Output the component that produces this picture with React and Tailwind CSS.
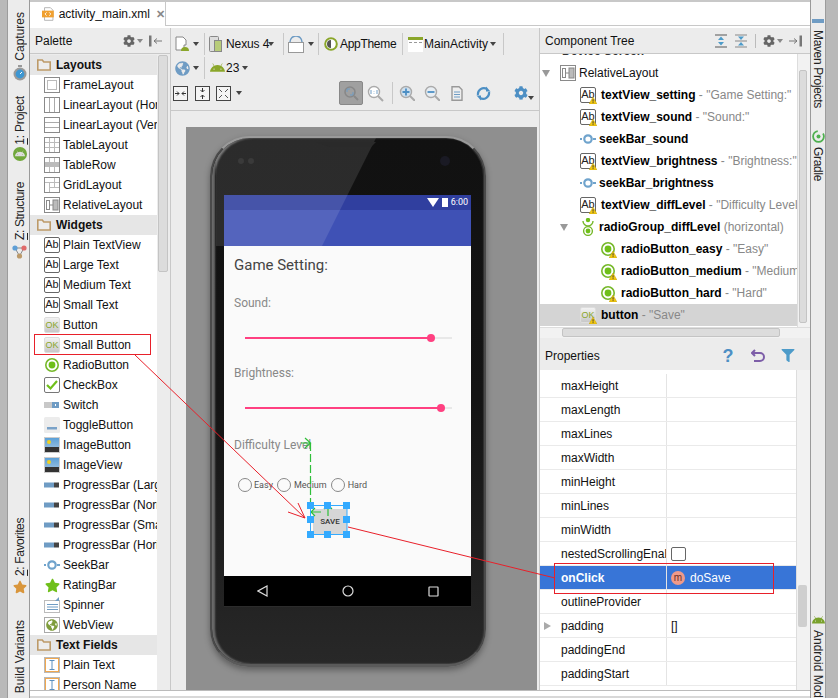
import React from "react";
import { FaAndroid, FaCog, FaGlobeAmericas, FaStar, FaFilter } from "react-icons/fa";

const UI = "font-['Liberation_Sans',sans-serif]";

const Caret = ({ className = "" }) => (
    <span className={`inline-block w-0 h-0 border-x-[3.5px] border-x-transparent border-t-[4px] border-t-[#444] ${className}`} />
);

const Sep = ({ className = "" }) => <span className={`w-px h-[22px] bg-[#c8c8c8] ${className}`} />;

const Box = ({ children }) => (
    <svg width="16" height="16" viewBox="0 0 16 16" fill="none" stroke="#8a8a8a">{children}</svg>
);

const AbIcon = () => (
    <span className="w-[16px] h-[16px] border border-[#666] rounded-[2px] bg-white text-[11px] leading-[13px] text-center text-[#222] shrink-0">Ab</span>
);

const OkIcon = () => (
    <span className="w-[16px] h-[16px] rounded-[2px] bg-gradient-to-b from-[#f2f2f2] to-[#c8c8c8] text-[9px] leading-[15px] text-center text-[#8aa62a] shrink-0 border border-[#ddd]">OK</span>
);

const Warn = () => (
    <svg className="absolute -right-[1px] -bottom-[1px]" width="8" height="7" viewBox="0 0 8 7"><path d="M4 0L8 7H0z" fill="#f2c811" stroke="#b89a10" strokeWidth="0.4" /><rect x="3.6" y="2.2" width="0.9" height="2.4" fill="#333" /><rect x="3.6" y="5.2" width="0.9" height="0.9" fill="#333" /></svg>
);

const RadioIcon = () => (
    <svg width="16" height="16" viewBox="0 0 16 16"><circle cx="8" cy="8" r="6.2" fill="#fff" stroke="#76b82a" strokeWidth="1.6" /><circle cx="8" cy="8" r="3.4" fill="#6fbf1a" /></svg>
);

const SeekIcon = () => (
    <svg width="16" height="10" viewBox="0 0 16 10"><rect x="0" y="4" width="2" height="2" fill="#6fa3cc" /><rect x="13" y="4" width="3" height="2" fill="#6fa3cc" /><circle cx="8" cy="5" r="3.7" fill="none" stroke="#6fa3cc" strokeWidth="2.2" /></svg>
);

const BarIcon = () => (
    <svg width="16" height="6" viewBox="0 0 16 6"><rect width="10" height="5" y="0.5" fill="#6f9cc4" /><rect x="10" width="5" height="5" y="0.5" fill="#444" /></svg>
);

const PicIcon = () => (
    <span className="w-[16px] h-[16px] border border-[#ccc] bg-gradient-to-b from-[#5aa0d8] to-[#a8c8e0] flex items-end relative shrink-0">
        <span className="absolute left-[2px] top-[2px] w-[4px] h-[4px] rounded-full bg-[#f0d020]" />
        <span className="w-full h-[5px] bg-[#333]" />
    </span>
);

const TextFieldIcon = () => (
    <svg width="16" height="16" viewBox="0 0 16 16"><rect x="0.5" y="0.5" width="15" height="15" fill="#fff" stroke="#b9b9b9" /><rect x="1.5" y="1.5" width="13" height="13" fill="#fff" stroke="#f0a850" /><path d="M5.5 3.5h5M5.5 12.5h5M8 3.5v9" stroke="#5a90c0" fill="none" /></svg>
);

const layoutIcons = {
    frame: <Box><rect x="0.5" y="0.5" width="15" height="15" /><rect x="3.5" y="3.5" width="9" height="9" stroke="#bbb" /></Box>,
    horiz: <Box><rect x="0.5" y="0.5" width="15" height="15" /><path d="M5.5 1v14M10.5 1v14" stroke="#aaa" /></Box>,
    vert: <Box><rect x="0.5" y="0.5" width="15" height="15" /><path d="M1 5.5h14M1 10.5h14" stroke="#aaa" /></Box>,
    table: <Box><rect x="0.5" y="0.5" width="15" height="15" /><path d="M1 5.5h14M1 10.5h14M5.5 1v14M10.5 1v14" stroke="#bbb" /></Box>,
    row: <Box><rect x="0.5" y="0.5" width="15" height="15" /><rect x="1" y="5" width="14" height="5" fill="#bbb" stroke="none" /><path d="M5.5 1v4M10.5 1v4M5.5 10v5M10.5 10v5" stroke="#bbb" /></Box>,
    grid: <Box><rect x="0.5" y="0.5" width="15" height="15" /><path d="M1 5.5h14M5.5 5v10M10.5 1v10M5 10.5h10" stroke="#bbb" /></Box>,
    relative: <Box><rect x="0.5" y="0.5" width="15" height="15" /><rect x="9" y="3" width="5" height="10" fill="#bbb" stroke="#888" /><rect x="2.5" y="3.5" width="3" height="9" /><path d="M5.5 8H9" /></Box>,
};

const spinnerIcon = (
    <svg width="16" height="16" viewBox="0 0 16 16"><rect x="0.5" y="3.5" width="15" height="12" fill="#fff" stroke="#bbb" /><path d="M3 7.5h11M3 10h11M3 12.5h11" stroke="#6f9cc4" /><path d="M15 0v4h-4z" fill="#6f9cc4" /></svg>
);

const palette = [
    { head: "Layouts" },
    { label: "FrameLayout", icon: layoutIcons.frame },
    { label: "LinearLayout (Horizontal)", icon: layoutIcons.horiz },
    { label: "LinearLayout (Vertical)", icon: layoutIcons.vert },
    { label: "TableLayout", icon: layoutIcons.table },
    { label: "TableRow", icon: layoutIcons.row },
    { label: "GridLayout", icon: layoutIcons.grid },
    { label: "RelativeLayout", icon: layoutIcons.relative },
    { head: "Widgets" },
    { label: "Plain TextView", icon: <AbIcon /> },
    { label: "Large Text", icon: <AbIcon /> },
    { label: "Medium Text", icon: <AbIcon /> },
    { label: "Small Text", icon: <AbIcon /> },
    { label: "Button", icon: <OkIcon /> },
    { label: "Small Button", icon: <OkIcon /> },
    { label: "RadioButton", icon: <RadioIcon /> },
    {
        label: "CheckBox",
        icon: <svg width="16" height="16" viewBox="0 0 16 16"><rect x="0.5" y="0.5" width="15" height="15" rx="1.5" fill="#fff" stroke="#777" /><path d="M3 8l3.5 3.5L13 4" fill="none" stroke="#6fbf1a" strokeWidth="2.2" /></svg>,
    },
    {
        label: "Switch",
        icon: <svg width="16" height="8" viewBox="0 0 16 8"><rect y="1" width="9" height="6" fill="#c8c8c8" /><rect x="8" y="1" width="7" height="6" fill="#6f9cc4" /><rect x="11" y="3" width="1" height="2" fill="#fff" /></svg>,
    },
    {
        label: "ToggleButton",
        icon: <svg width="16" height="16" viewBox="0 0 16 16"><rect width="16" height="16" rx="1.5" fill="#ececec" /><rect x="3" y="10" width="10" height="2.5" fill="#7aa2c8" /></svg>,
    },
    { label: "ImageButton", icon: <PicIcon /> },
    { label: "ImageView", icon: <PicIcon /> },
    { label: "ProgressBar (Large)", icon: <BarIcon /> },
    { label: "ProgressBar (Normal)", icon: <BarIcon /> },
    { label: "ProgressBar (Small)", icon: <BarIcon /> },
    { label: "ProgressBar (Horizontal)", icon: <BarIcon /> },
    { label: "SeekBar", icon: <SeekIcon /> },
    { label: "RatingBar", icon: <FaStar className="text-[#6fbf1a] text-[15px]" /> },
    { label: "Spinner", icon: spinnerIcon },
    {
        label: "WebView",
        icon: <span className="w-[16px] h-[16px] border border-[#aaa] bg-white flex items-center justify-center shrink-0"><FaGlobeAmericas className="text-[#7f9d3c] text-[12px]" /></span>,
    },
    { head: "Text Fields" },
    { label: "Plain Text", icon: <TextFieldIcon /> },
    { label: "Person Name", icon: <TextFieldIcon /> },
];

const tree = [
    { indent: 40, icon: "ab", id: "textView_setting", rest: ' - "Game Setting:"' },
    { indent: 40, icon: "ab", id: "textView_sound", rest: ' - "Sound:"' },
    { indent: 40, icon: "seek", id: "seekBar_sound" },
    { indent: 40, icon: "ab", id: "textView_brightness", rest: ' - "Brightness:"' },
    { indent: 40, icon: "seek", id: "seekBar_brightness" },
    { indent: 40, icon: "ab", id: "textView_diffLevel", rest: ' - "Difficulty Level"' },
    { indent: 40, icon: "group", id: "radioGroup_diffLevel", rest: " (horizontal)" },
    { indent: 60, icon: "radio", id: "radioButton_easy", rest: ' - "Easy"' },
    { indent: 60, icon: "radio", id: "radioButton_medium", rest: ' - "Medium"' },
    { indent: 60, icon: "radio", id: "radioButton_hard", rest: ' - "Hard"' },
    { indent: 40, icon: "ok", id: "button", rest: ' - "Save"', selected: true },
];

const props = ["maxHeight", "maxLength", "maxLines", "maxWidth", "minHeight", "minLines", "minWidth", "nestedScrollingEnabled", "onClick", "outlineProvider", "padding", "paddingEnd", "paddingStart"];

const TreeIcon = ({ type }) => {
    if (type === "seek") return <span className="w-[16px] flex justify-center mr-[1px]"><SeekIcon /></span>;
    if (type === "group") {
        return (
            <svg className="mr-[1px]" width="16" height="18" viewBox="0 0 16 18">
                <path d="M3 3a5 5 0 0 0 10 0" fill="none" stroke="#76b82a" strokeWidth="1.4" />
                <circle cx="8" cy="2" r="2.2" fill="#6fbf1a" />
                <circle cx="8" cy="13" r="4.4" fill="#fff" stroke="#76b82a" strokeWidth="1.4" />
                <circle cx="8" cy="13" r="2.4" fill="#6fbf1a" />
            </svg>
        );
    }
    return (
        <span className="relative w-[16px] h-[16px] flex mr-[3px] shrink-0">
            {type === "ab" && <AbIcon />}
            {type === "ok" && <OkIcon />}
            {type === "radio" && <RadioIcon />}
            <Warn />
        </span>
    );
};

const VText = ({ children, up, className = "" }) => (
    <span className={`[writing-mode:vertical-rl] whitespace-nowrap text-[12px] leading-[14px] text-[#222] ${up ? "rotate-180" : ""} ${className}`}>{children}</span>
);

const LeftBar = () => (
    <div className="w-[30px] shrink-0 flex h-full overflow-hidden">
        <div className="w-[8px] bg-[#b9b9b9] border-r border-[#9c9c9c]" />
        <div className="flex-1 bg-[#ececec] border-r border-[#9a9a9a] flex flex-col items-center pt-[12px] pl-[2px]">
            <VText up>Captures</VText>
            <svg className="mt-[4px]" width="14" height="16" viewBox="0 0 14 16"><rect x="5" y="0" width="4" height="2" fill="#999" /><circle cx="7" cy="9" r="6.5" fill="#9a9a9a" /><circle cx="7" cy="9" r="4.4" fill="#3d97d3" /><path d="M7 9l2-2" stroke="#fff" /></svg>
            <VText up className="mt-[15px] tracking-[-0.2px]"><span className="underline">1</span>: Project</VText>
            <span className="mt-[3px] w-[14px] h-[14px] rounded-full bg-[#71a83c] flex items-center justify-center"><FaAndroid className="text-[#ddd] text-[10px]" /></span>
            <VText up className="mt-[21px] tracking-[-0.4px]"><span className="underline">Z</span>: Structure</VText>
            <svg className="mt-[5px]" width="15" height="14" viewBox="0 0 15 14"><path d="M3 3L7.5 11M12 3L7.5 11M3 3h9" stroke="#888" fill="none" /><circle cx="3" cy="3" r="2.6" fill="#5f9fd6" /><circle cx="12" cy="3" r="2.6" fill="#e06b6b" /><circle cx="7.5" cy="11" r="2.6" fill="#bc9a6a" /></svg>
            <VText up className="mt-auto tracking-[-0.4px]"><span className="underline">2</span>: Favorites</VText>
            <FaStar className="mt-[4px] text-[#d9963c] text-[14px]" />
            <VText up className="mt-[26px] mb-[5px]">Build Variants</VText>
        </div>
    </div>
);

const RightBar = () => (
    <div className="w-[28px] shrink-0 flex h-full overflow-hidden">
        <div className="w-[15px] bg-[#ececec] border-l border-[#9a9a9a] flex flex-col items-center pt-[19px]">
            <span className="w-[12px] h-[4px] bg-[#6f9cc4]" />
            <VText className="mt-[7px] tracking-[-0.35px]">Maven Projects</VText>
            <svg className="mt-[22px]" width="13" height="13" viewBox="0 0 13 13"><circle cx="6.5" cy="6.5" r="5.4" fill="none" stroke="#4fb04f" strokeWidth="1.8" strokeDasharray="24 6" /><circle cx="6.5" cy="6.5" r="2" fill="#4fb04f" /></svg>
            <VText className="mt-[4px] tracking-[-0.3px]">Gradle</VText>
            <FaAndroid className="mt-auto text-[#7aa22c] text-[13px]" />
            <VText className="mt-[3px] h-[68px] overflow-hidden">Android Model</VText>
        </div>
        <div className="flex-1 bg-[#b9b9b9] border-l border-[#9c9c9c]" />
    </div>
);

const PanelHead = ({ title, children }) => (
    <div className="h-[26px] flex items-center bg-[#ececec] border-b border-[#c8c8c8] pl-[5px] pr-[8px] text-[12px] text-[#111] shrink-0">
        <span>{title}</span>
        <span className="ml-auto flex items-center">{children}</span>
    </div>
);

const GearCaret = () => (
    <span className="flex items-center gap-[2px] text-[#666]"><FaCog className="text-[12px]" /><Caret className="border-t-[#888]" /></span>
);

const Palette = () => (
    <div className="w-[140px] shrink-0 flex flex-col h-full overflow-hidden bg-[#ececec]">
        <PanelHead title="Palette">
            <GearCaret />
            <svg className="ml-[6px]" width="13" height="12" viewBox="0 0 13 12"><rect x="0" y="0.5" width="2.5" height="11" fill="#777" /><path d="M5 6h8M8 3.5L5 6l3 2.5" fill="none" stroke="#777" /></svg>
        </PanelHead>
        <div className="flex-1 flex pt-[1px] min-h-0 overflow-hidden">
            <div className="w-[127px] bg-white flex flex-col text-[12px] text-[#111]">
                {palette.map((row) =>
                    row.head ? (
                        <div key={row.head} className="h-[20px] shrink-0 bg-[#e6e6e6] flex items-center pl-[7px] gap-[5px] font-bold">
                            <svg width="14" height="12" viewBox="0 0 14 12"><path d="M0.8 1h4.5l1.5 2h6.4v8H0.8z" fill="#ededed" stroke="#bd9a68" strokeWidth="1.6" /></svg>
                            {row.head}
                        </div>
                    ) : (
                        <div key={row.label} className="h-[20px] shrink-0 flex items-center pl-[14px] whitespace-nowrap overflow-hidden">
                            <span className="w-[16px] h-[16px] flex items-center justify-center mr-[3px] shrink-0">{row.icon}</span>
                            {row.label}
                        </div>
                    )
                )}
            </div>
            <div className="w-[13px] pl-[1px] pr-[2px]">
                <div className="h-[217px] bg-[#dcdcdc] border border-[#c4c4c4] rounded-[2px]" />
            </div>
        </div>
    </div>
);

const Toolbar = () => (
    <div className="h-[83px] shrink-0 bg-[#ececec] border-b border-[#c8c8c8] flex flex-col text-[12px] text-[#111] px-[4px] whitespace-nowrap">
        <div className="h-[24px] mt-[4px] flex items-center">
            <svg width="15" height="16" viewBox="0 0 15 16"><path d="M1 1h7l3 3v5h-2v5H1z" fill="#fff" stroke="#888" /><path d="M6 15a4 4 0 0 1 8 0z" fill="#8aa62a" /></svg>
            <Caret className="ml-[3px]" />
            <Sep className="ml-[5px]" />
            <svg className="ml-[4px]" width="13" height="16" viewBox="0 0 13 16"><rect x="0.5" y="0.5" width="9" height="15" rx="1" fill="#ddd" stroke="#888" /><rect x="5.5" y="4.5" width="7" height="11" fill="#b8cc7a" stroke="#888" /></svg>
            <span className="ml-[4px] w-[41px] tracking-[-0.1px]">Nexus 4</span>
            <Caret className="ml-[1px]" />
            <Sep className="ml-[9px]" />
            <svg className="ml-[4px]" width="16" height="17" viewBox="0 0 16 17"><rect x="0.5" y="6.5" width="15" height="10" fill="#fff" stroke="#999" /><path d="M2 6a6 6 0 0 1 12 0" fill="none" stroke="#6f9cc4" strokeWidth="1.5" /></svg>
            <Caret className="ml-[4px]" />
            <Sep className="ml-[4px]" />
            <svg className="ml-[5px]" width="14" height="14" viewBox="0 0 14 14"><circle cx="7" cy="7" r="5.8" fill="#fff" stroke="#8aa62a" strokeWidth="2" /><path d="M7 3a4 4 0 0 0 0 8z" fill="#555" /></svg>
            <span className="ml-[2px] w-[54px] tracking-[-0.3px]">AppTheme</span>
            <Sep className="ml-[8px]" />
            <svg className="ml-[5px]" width="15" height="15" viewBox="0 0 15 15"><rect width="15" height="15" fill="#fff" /><rect width="15" height="3" fill="#8aa62a" /><rect x="1" y="5" width="3" height="1" fill="#999" /><rect x="6" y="5" width="3" height="1" fill="#999" /><rect x="11" y="5" width="3" height="1" fill="#999" /></svg>
            <span className="ml-[1px] w-[62px]">MainActivity</span>
            <Caret className="ml-[4px]" />
            <Sep className="ml-[7px]" />
        </div>
        <div className="h-[24px] flex items-center">
            <FaGlobeAmericas className="text-[#6f9cc4] text-[15px]" />
            <Caret className="ml-[3px]" />
            <Sep className="ml-[5px]" />
            <FaAndroid className="ml-[5px] text-[#8aa62a] text-[15px]" />
            <span className="ml-[1px]">23</span>
            <Caret className="ml-[3px]" />
        </div>
        <div className="h-[26px] -ml-[2px] flex items-center">
            <svg width="15" height="15" viewBox="0 0 15 15"><rect x="0.5" y="0.5" width="14" height="14" fill="#f4f4f4" stroke="#444" /><path d="M2 7.5h4M9 7.5h4M4 5.5l2 2-2 2M11 5.5l-2 2 2 2" fill="none" stroke="#333" /></svg>
            <svg className="ml-[7px]" width="15" height="15" viewBox="0 0 15 15"><rect x="0.5" y="0.5" width="14" height="14" fill="#f4f4f4" stroke="#444" /><path d="M7.5 2v4M7.5 9v4M5.5 4l2 2 2-2M5.5 11l2-2 2 2" fill="none" stroke="#333" /></svg>
            <svg className="ml-[6px]" width="15" height="15" viewBox="0 0 15 15"><rect x="0.5" y="0.5" width="14" height="14" fill="#f4f4f4" stroke="#444" /><path d="M3 3l3 3M12 3L9 6M3 12l3-3M12 12L9 9" fill="none" stroke="#555" /></svg>
            <Caret className="ml-[5px]" />
            <span className="ml-[97px] w-[24px] h-[24px] bg-[#a0a0a0] border border-[#888] rounded-[2px] flex items-center justify-center">
                <svg width="16" height="16" viewBox="0 0 16 16"><circle cx="7" cy="7" r="5" fill="none" stroke="#888" strokeWidth="1.6" /><path d="M11 11l4 4" stroke="#888" strokeWidth="2" /><path d="M4 7V4h3M10 7v3H7" fill="none" stroke="#6f9cc4" /></svg>
            </span>
            <svg className="ml-[4px]" width="17" height="17" viewBox="0 0 17 17"><circle cx="7" cy="7" r="5.5" fill="#fff" stroke="#aaa" strokeWidth="1.4" /><path d="M11 11l5 5" stroke="#aaa" strokeWidth="2" /><path d="M4 5v4M10 5v4M7 6v.5M7 8v.5" stroke="#6f9cc4" /></svg>
            <Sep className="ml-[8px]" />
            <svg className="ml-[6px]" width="16" height="16" viewBox="0 0 16 16"><circle cx="7" cy="7" r="5.5" fill="#cfe0ee" stroke="#aaa" strokeWidth="1.4" /><path d="M11 11l5 5" stroke="#aaa" strokeWidth="2" /><path d="M3.5 7h7M7 3.5v7" stroke="#4d8fc4" strokeWidth="1.8" /></svg>
            <svg className="ml-[9px]" width="16" height="16" viewBox="0 0 16 16"><circle cx="7" cy="7" r="5.5" fill="#e8eef3" stroke="#aaa" strokeWidth="1.4" /><path d="M11 11l5 5" stroke="#aaa" strokeWidth="2" /><path d="M3.5 7h7" stroke="#4d8fc4" strokeWidth="1.8" /></svg>
            <svg className="ml-[11px]" width="12" height="15" viewBox="0 0 12 15"><path d="M1 .8h7l3 3v10.4H1z" fill="#eee" stroke="#999" strokeWidth="1.4" /><path d="M3 6h6M3 8.5h6M3 11h6" stroke="#6f9cc4" /></svg>
            <svg className="ml-[13px]" width="15" height="15" viewBox="0 0 15 15" fill="none" stroke="#4d8fc4" strokeWidth="2.2"><path d="M2 9a6 6 0 0 1 9-6" /><path d="M13 6a6 6 0 0 1-9 6" /><path d="M10 0.5v5h4.5z" fill="#4d8fc4" stroke="none" /><path d="M5 14.5v-5H0.5z" fill="#4d8fc4" stroke="none" /></svg>
            <span className="ml-auto mr-[1px] flex items-end">
                <FaCog className="text-[#4d8fc4] text-[14px]" />
                <Caret />
            </span>
        </div>
    </div>
);

const Phone = () => (
    <div className="relative w-[276px] h-[531px] mt-[9px] ml-[24px] rounded-t-[40px] rounded-b-[38px] bg-gradient-to-b from-[#111] via-[#141414] to-[#282828] border-t-2 border-x-2 border-b-[3px] border-t-[#9a9a9a] border-x-[#4a4a4a] border-b-[#5a5a5a] shadow-[0_3px_6px_rgba(0,0,0,0.35),inset_3px_0_2px_#6a6a6a,inset_-1px_0_1px_#333] pt-[57px] pl-[12px] pr-[10px] font-['Roboto',sans-serif]">
        <div className="relative w-[247px]">
            <div className="h-[15px] bg-[#303f9f] flex items-center justify-end gap-[3px] pr-[3px] text-[9px] text-white">
                <svg width="12" height="9" viewBox="0 0 12 9"><path d="M0 0h12L6 9z" fill="#fff" /></svg>
                <span className="w-[6px] h-[9px] bg-white" />
                <span>6:00</span>
            </div>
            <div className="h-[36px] bg-[#3f51b5]" />
            <div className="h-[330px] bg-[#fafafa] pl-[10px] flex flex-col">
                <p className="mt-[10px] text-[15px] leading-[18px] text-[#444]">Game Setting:</p>
                <p className="mt-[22px] text-[12px] leading-[14px] text-[#888]">Sound:</p>
                <div className="mt-[27px] ml-[11px] w-[207px] relative h-[2px] bg-[#e8e8e8]">
                    <div className="h-[2px] w-[186px] bg-[#ff4081]" />
                    <span className="absolute left-[182px] -top-[3px] w-[8px] h-[8px] rounded-full bg-[#ff4081]" />
                </div>
                <p className="mt-[27px] text-[12px] leading-[14px] text-[#888]">Brightness:</p>
                <div className="mt-[27px] ml-[11px] w-[207px] relative h-[2px] bg-[#e8e8e8]">
                    <div className="h-[2px] w-[196px] bg-[#ff4081]" />
                    <span className="absolute left-[192px] -top-[3px] w-[8px] h-[8px] rounded-full bg-[#ff4081]" />
                </div>
                <p className="mt-[29px] text-[12px] leading-[14px] text-[#888]">Difficulty Level</p>
                <div className="mt-[26px] ml-[4px] flex items-center text-[9px] leading-[14px] text-[#555]">
                    <span className="w-[14px] h-[14px] rounded-full border-[1.5px] border-[#888]" />
                    <span className="ml-[2px]">Easy</span>
                    <span className="ml-[4px] w-[14px] h-[14px] rounded-full border-[1.5px] border-[#888]" />
                    <span className="ml-[3px]">Medium</span>
                    <span className="ml-[4px] w-[14px] h-[14px] rounded-full border-[1.5px] border-[#888]" />
                    <span className="ml-[3px]">Hard</span>
                </div>
                <div className="relative mt-[17px] ml-[79px] w-[34px] h-[25px] bg-[#d6d6d6] flex items-center justify-center text-[8px] font-medium text-[#333]">
                    SAVE
                </div>
            </div>
            <div className="h-[31px] bg-black border-b border-[#2c2c2c] flex items-center pl-[33px] pr-[32px] justify-between">
                <svg width="11" height="12" viewBox="0 0 11 12"><path d="M10 1v10L1 6z" fill="none" stroke="#ddd" strokeWidth="1.2" /></svg>
                <svg width="12" height="12" viewBox="0 0 12 12"><circle cx="6" cy="6" r="5" fill="none" stroke="#ddd" strokeWidth="1.2" /></svg>
                <svg width="11" height="11" viewBox="0 0 11 11"><rect x="1" y="1" width="9" height="9" rx="0.5" fill="none" stroke="#ddd" strokeWidth="1.2" /></svg>
            </div>
        </div>
        <svg className="absolute left-0 top-0 pointer-events-none" width="272" height="108" viewBox="0 0 272 108">
            <defs>
                <clipPath id="bezel"><path d="M0 108V38Q2 4 40 0H272V108z" /></clipPath>
            </defs>
            <g clipPath="url(#bezel)">
                <path d="M4 0H164L110 108H4z" fill="#fff" fillOpacity="0.11" />
            </g>
            <path d="M104 4H164L159 9H118z" fill="#2a2a2a" />
            <circle cx="29" cy="23" r="3" fill="#3a3a3a" />
            <circle cx="39" cy="23" r="3" fill="#3a3a3a" />
            <circle cx="233" cy="23" r="5" fill="#1a1a24" />
        </svg>
    </div>
);

const Designer = () => (
    <div className="w-[370px] shrink-0 flex flex-col h-full overflow-hidden bg-[#ececec] border-x border-[#c8c8c8]">
        <Toolbar />
        <div className="h-[16px] shrink-0" />
        <div className="flex-1 ml-[15px] mr-[2px] bg-[#8f8f8f] overflow-hidden">
            <Phone />
        </div>
    </div>
);

const RightPanels = () => (
    <div className="flex-1 flex flex-col h-full overflow-hidden min-w-0 text-[12px] text-[#111]">
        <PanelHead title="Component Tree">
            <svg width="14" height="14" viewBox="0 0 14 14"><path d="M1 1h12M1 13h12" stroke="#888" strokeWidth="1.4" /><path d="M7 2.5l3 3.5H4zM7 11.5l3-3.5H4z" fill="#4d9bc9" /></svg>
            <svg className="ml-[6px]" width="14" height="14" viewBox="0 0 14 14"><path d="M1 1h12M1 13h12M1 7h12" stroke="#888" strokeWidth="1.2" /><path d="M7 6l3-3.5H4zM7 8l3 3.5H4z" fill="#4d9bc9" /></svg>
            <span className="w-px h-[14px] bg-[#bbb] mx-[7px]" />
            <GearCaret />
            <svg className="ml-[6px]" width="13" height="12" viewBox="0 0 13 12"><path d="M0 6h8M5 3.5L8 6 5 8.5" fill="none" stroke="#777" /><rect x="10.5" y="0.5" width="2.5" height="11" fill="#777" /></svg>
        </PanelHead>
        <div className="h-[273px] shrink-0 flex bg-white overflow-hidden">
            <div className="w-[257px] overflow-hidden whitespace-nowrap">
                <div className="h-[8px] overflow-hidden relative">
                    <span className="absolute left-[22px] -top-[12px] font-bold text-[#333]">Device Screen</span>
                </div>
                <div className="h-[22px] flex items-center">
                    <span className="ml-[2px] w-0 h-0 border-x-[4px] border-x-transparent border-t-[7px] border-t-[#999]" />
                    <span className="ml-[10px] mr-[3px]">{layoutIcons.relative}</span>
                    RelativeLayout
                </div>
                {tree.map((row) => (
                    <div
                        key={row.id}
                        className={`h-[22px] flex items-center overflow-hidden ${row.selected ? "bg-[#d4d4d4]" : ""}`}
                        style={{ paddingLeft: row.indent }}
                    >
                        {row.icon === "group" && <span className="-ml-[20px] mr-[12px] w-0 h-0 border-x-[4px] border-x-transparent border-t-[7px] border-t-[#999]" />}
                        <TreeIcon type={row.icon} />
                        <span className="font-bold ml-[2px] text-black">{row.id}</span>
                        {row.rest && <span className="text-[#888] whitespace-pre">{row.rest}</span>}
                    </div>
                ))}
            </div>
            <div className="flex-1 bg-[#f2f2f2] border-l border-[#ddd] pl-[1px] pr-[3px] pt-[16px]">
                <div className="h-[253px] bg-[#dcdcdc] border border-[#c4c4c4] rounded-[2px]" />
            </div>
        </div>
        <div className="h-[11px] shrink-0 bg-[#f2f2f2] border-t border-[#ddd] pl-[22px]">
            <div className="w-[218px] h-[9px] bg-[#dcdcdc] border border-[#c4c4c4] rounded-[2px]" />
        </div>
        <div className="h-[32px] shrink-0 bg-[#ececec] flex items-center pt-[3px] pl-[5px] pr-[15px]">
            Properties
            <span className="ml-auto flex items-center gap-[16px]">
                <span className="w-[14px] text-center text-[18px] leading-[18px] font-bold text-[#4d8fc4]">?</span>
                <svg width="14" height="14" viewBox="0 0 14 14"><path d="M4 1L1 4l3 3M1 4h8a4 4 0 0 1 0 8H3" fill="none" stroke="#7d5ea8" strokeWidth="2" /></svg>
                <FaFilter className="w-[14px] text-[#4d9bc9] text-[13px]" />
            </span>
        </div>
        <div className="flex-1 flex bg-white overflow-hidden min-h-0">
            <div className="w-[256px] pt-[4px]">
                {props.map((name) => (
                    <div key={name} className={`h-[24px] flex items-center border-b border-[#eaeaea] ${name === "onClick" ? "bg-[#3875d7] text-white" : ""}`}>
                        <div className={`relative w-[127px] h-full flex items-center pl-[21px] border-r border-[#e4e4e4] whitespace-nowrap overflow-hidden ${name === "onClick" ? "font-bold" : ""}`}>
                            {name === "padding" && <span className="absolute left-[4px] w-0 h-0 border-y-[4px] border-y-transparent border-l-[7px] border-l-[#aaa]" />}
                            {name}
                        </div>
                        <div className="flex-1 pl-[4px] flex items-center">
                            {name === "nestedScrollingEnabled" && <span className="w-[15px] h-[14px] bg-white border border-[#666] rounded-[2px]" />}
                            {name === "onClick" && (
                                <>
                                    <span className="w-[14px] h-[14px] rounded-full bg-[#f09a8a] text-[#6a3028] text-[10px] leading-[13px] text-center">m</span>
                                    <span className="ml-[5px]">doSave</span>
                                </>
                            )}
                            {name === "padding" && "[]"}
                        </div>
                    </div>
                ))}
            </div>
            <div className="flex-1 bg-[#f2f2f2] border-l border-[#ddd] pl-[1px] pr-[3px] pt-[215px]">
                <div className="h-[42px] bg-[#cfcfcf] rounded-[2px]" />
            </div>
        </div>
    </div>
);

const Annotations = () => (
    <svg className="absolute left-0 top-0 pointer-events-none" width="838" height="698" viewBox="0 0 838 698" fill="none">
        <g stroke="#e8202a">
            <rect x="34.5" y="334.5" width="116" height="20" />
            <rect x="554.5" y="563.5" width="219" height="30" />
            <path d="M135 355L305 518M288 512L305 518L298 503" />
            <path d="M348 527L555 578" />
        </g>
        <g stroke="#2fbf3a" strokeWidth="1.2">
            <path d="M310.5 443V505" strokeDasharray="8 3" />
            <path d="M301 443H310M305 438L310.5 443L305 448" />
            <path d="M311 512H321M315 508L311 512L315 516" />
            <path d="M328 516V505M324 509L328 505L332 509" />
        </g>
        <g>
            <rect x="310.5" y="505.5" width="36.5" height="29" stroke="#33aaff" />
            {[307, 324, 343].map((x) =>
                [502, 516, 531].map((y) =>
                    x === 324 && y === 516 ? null : <rect key={`${x}-${y}`} x={x} y={y} width="7" height="7" fill="#33aaff" />
                )
            )}
        </g>
    </svg>
);

const App = () => (
    <div className={`relative w-[838px] h-[698px] overflow-hidden flex bg-[#ececec] ${UI}`}>
        <LeftBar />
        <div className="flex-1 flex flex-col h-full min-w-0">
            <div className="h-[28px] shrink-0 bg-white border-t-2 border-[#c8c8c8] flex text-[12px] text-[#111]">
                <div className="w-[136px] h-[24px] flex items-center pl-[12px] border-r border-[#c8c8c8]">
                    <svg width="15" height="16" viewBox="0 0 15 16"><path d="M3 .5h7l3 3V15.5H3z" fill="#fff" stroke="#aaa" /><rect x="0" y="4" width="14" height="8" fill="#f0a030" /><path d="M5.5 6L3.5 8l2 2M8.5 6l2 2-2 2" fill="none" stroke="#fff" /></svg>
                    <span className="ml-[4px]">activity_main.xml</span>
                    <span className="ml-[6px] text-[#888] text-[11px] font-bold">✕</span>
                </div>
                <div className="flex-1 border-b border-[#c8c8c8] h-[24px]" />
            </div>
            <div className="flex-1 flex min-h-0 bg-[#ececec]">
                <Palette />
                <Designer />
                <RightPanels />
            </div>
            <div className="h-[8px] shrink-0 bg-white border-t border-[#bbb] border-b-2 border-b-[#d8d8d8]" />
        </div>
        <RightBar />
        <Annotations />
    </div>
);

export default App;
